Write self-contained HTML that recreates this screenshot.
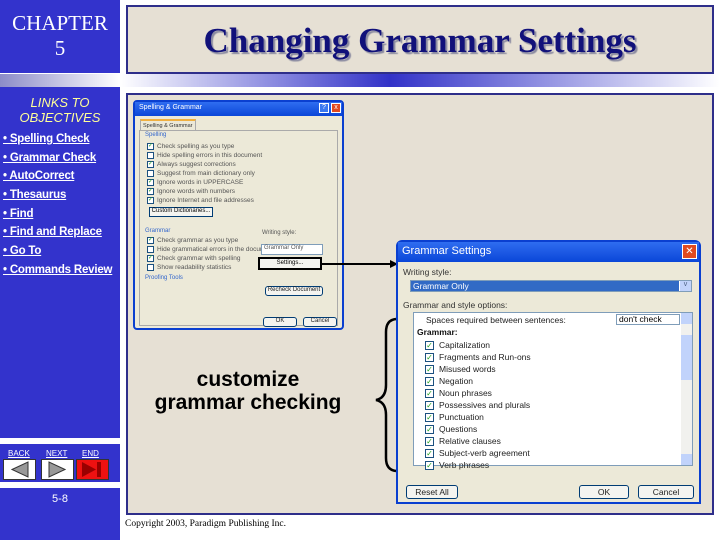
<!DOCTYPE html>
<html><head><meta charset="utf-8"><style>
*{margin:0;padding:0;box-sizing:border-box}
body{width:720px;height:540px;position:relative;background:#fff;font-family:"Liberation Sans",sans-serif;overflow:hidden}
.abs{position:absolute}
.blue{background:#3333cc}
.beige{background:#e6e0d4;border:2px solid #2e2e8a}
.links a{color:#fff;font-weight:bold;font-size:11.5px;text-decoration:underline;display:block;height:18.7px;font-family:"Liberation Sans Narrow","Liberation Sans",sans-serif;letter-spacing:-0.2px}
.dlg{background:#ece9d8;border:2px solid #0a3fd0;border-radius:6px 6px 0 0}
.tb{background:linear-gradient(#2f6df0,#0a46d8);color:#fff;font-size:8px;padding:2px 5px}
.cb{display:flex;align-items:center;font-size:6.5px;color:#555;height:9px;margin-left:12px;white-space:nowrap}
.cb i{width:7px;height:7px;border:1px solid #1c5180;background:#fff;margin-right:3px;font-size:6px;line-height:5px;color:#21a121;font-style:normal;text-align:center}
.gl{display:flex;align-items:center;font-size:8.5px;color:#222;height:12px;margin-left:11px}
.gl i{width:9px;height:9px;border:1px solid #1c5180;background:#fff;margin-right:5px;font-size:8px;line-height:7px;color:#21a121;font-style:normal;text-align:center}
.btn{position:absolute;border:1px solid #003c74;background:#f4f4f0;border-radius:3px;font-size:8px;text-align:center;color:#222}
</style></head><body>
<div class="abs blue" style="left:0;top:0;width:120px;height:73px;color:#fff;font-family:'Liberation Serif',serif;font-size:21px;text-align:center;line-height:25px;padding-top:11px">CHAPTER<br>5</div>
<div class="abs" style="left:0;top:74px;width:120px;height:13px;background:linear-gradient(90deg,#8c8cc8,#fff)"></div>
<div class="abs" style="left:120px;top:74px;width:600px;height:13px;background:linear-gradient(90deg,#fff 0%,#3232c8 45%,#fff 100%)"></div>
<div class="abs blue" style="left:0;top:87px;width:120px;height:351px">
<div style="color:#ffff99;font-style:italic;font-size:13px;text-align:center;line-height:15px;margin-top:8px">LINKS TO<br>OBJECTIVES</div>
<div class="links" style="position:absolute;left:3px;top:46px;color:#fff;font-size:11px">
<a>• Spelling Check</a><a>• Grammar Check</a><a>• AutoCorrect</a><a>• Thesaurus</a><a>• Find</a><a>• Find and Replace</a><a>• Go To</a><a>• Commands Review</a></div></div>
<div class="abs blue" style="left:0;top:444px;width:120px;height:38px">
<div style="position:absolute;top:5px;left:8px;color:#fff;font-size:8px;text-decoration:underline">BACK</div>
<div style="position:absolute;top:5px;left:46px;color:#fff;font-size:8px;text-decoration:underline">NEXT</div>
<div style="position:absolute;top:5px;left:82px;color:#fff;font-size:8px;text-decoration:underline">END</div>
<svg style="position:absolute;left:3px;top:15px" width="106" height="21"><rect x="0.5" y="0.5" width="32" height="20" fill="#fff" stroke="#333"/><polygon points="9,10.5 25,3 25,18" fill="#999" stroke="#333"/><rect x="38.5" y="0.5" width="32" height="20" fill="#fff" stroke="#333"/><polygon points="62,10.5 46,3 46,18" fill="#999" stroke="#333"/><rect x="73.5" y="0.5" width="32" height="20" fill="#ee1111" stroke="#333"/><polygon points="93,10.5 79,3 79,18" fill="#900"/><rect x="94" y="3" width="4" height="15" fill="#900"/></svg></div>
<div class="abs blue" style="left:0;top:488px;width:120px;height:52px;color:#fff;font-size:11px;text-align:center;padding-top:5px">5-8</div>
<div class="abs beige" style="left:126px;top:5px;width:588px;height:69px;font-family:'Liberation Serif',serif;font-weight:bold;font-size:35px;color:#11117a;text-align:center;line-height:68px;text-shadow:2px 2px 1px #8a8aa0">Changing Grammar Settings</div>
<div class="abs beige" style="left:126px;top:93px;width:588px;height:422px"></div>
<div class="abs" style="left:125px;top:519px;font-family:'Liberation Serif',serif;font-size:9.5px;color:#000">Copyright 2003, Paradigm Publishing Inc.</div>
<!-- spelling dialog -->
<div class="abs dlg" style="left:133px;top:100px;width:211px;height:230px;border-radius:4px">
<div class="tb" style="height:14px;font-size:7px;padding:2px 4px">Spelling &amp; Grammar<span style="position:absolute;right:13px;top:1px;width:10px;height:10px;background:#3a78f0;border:1px solid #fff;font-size:7px;text-align:center;line-height:8px">?</span><span style="position:absolute;right:1px;top:1px;width:10px;height:10px;background:#e04a20;border:1px solid #fff;font-size:7px;text-align:center;line-height:8px">x</span></div>
<div style="position:absolute;left:5px;top:17px;width:56px;height:11px;font-size:5.5px;color:#333;border:1px solid #aaa;border-bottom:none;padding:2px;white-space:nowrap;border-top:2px solid #f0b040">Spelling &amp; Grammar</div>
<div style="position:absolute;left:4px;top:28px;width:199px;height:196px;border:1px solid #aaa"></div>
<div style="position:absolute;left:0;top:30px;width:200px">
<div style="font-size:6px;color:#36c;margin:0 0 1px 10px;height:9px">Spelling</div>
<div class="cb"><i>✓</i>Check spelling as you type</div><div class="cb"><i></i>Hide spelling errors in this document</div><div class="cb"><i>✓</i>Always suggest corrections</div><div class="cb"><i></i>Suggest from main dictionary only</div><div class="cb"><i>✓</i>Ignore words in UPPERCASE</div><div class="cb"><i>✓</i>Ignore words with numbers</div><div class="cb"><i>✓</i>Ignore Internet and file addresses</div>
<div style="margin:2px 0 0 14px;width:64px;height:10px;border:1px solid #003c74;font-size:6px;text-align:center;background:#f4f4f0">Custom Dictionaries...</div>
<div style="font-size:6px;color:#36c;margin:11px 0 0 10px;height:8px">Grammar</div>
<div class="cb"><i>✓</i>Check grammar as you type</div><div class="cb"><i></i>Hide grammatical errors in the document</div><div class="cb"><i>✓</i>Check grammar with spelling</div><div class="cb"><i></i>Show readability statistics</div>
<div style="font-size:6px;color:#36c;margin:3px 0 0 10px">Proofing Tools</div>
</div>
<div style="position:absolute;left:127px;top:128px;font-size:6px;color:#555;background:#ece9d8">Writing style:</div>
<div style="position:absolute;left:126px;top:142px;width:62px;height:11px;border:1px solid #7f9db9;background:#fff;font-size:6px;color:#555;padding-left:2px">Grammar Only</div>
<div class="btn" style="left:130px;top:184px;width:58px;height:10px;font-size:6px">Recheck Document</div>
<div class="btn" style="left:128px;top:215px;width:34px;height:10px;font-size:6px">OK</div>
<div class="btn" style="left:168px;top:215px;width:34px;height:10px;font-size:6px">Cancel</div>
</div>
<div class="abs" style="left:258px;top:257px;width:64px;height:13px;border:2px solid #000;background:#f4f4f0;font-size:6px;text-align:center;line-height:9px">Settings...</div>
<svg class="abs" style="left:320px;top:240px" width="80" height="240"><line x1="0" y1="24" x2="72" y2="24" stroke="#000" stroke-width="2"/><polygon points="78,24 70,20 70,28" fill="#000"/>
<path d="M76 79 Q66 80 66 92 L66 145 Q66 158 56 160 Q66 162 66 175 L66 218 Q66 230 76 231" fill="none" stroke="#000" stroke-width="2.5"/></svg>
<div class="abs" style="left:128px;top:368px;width:240px;text-align:center;font-weight:bold;font-size:21px;line-height:23px;color:#000">customize<br>grammar checking</div>
<!-- grammar settings -->
<div class="abs dlg" style="left:396px;top:240px;width:305px;height:264px;border-color:#0a3fd0">
<div class="tb" style="height:20px;font-size:11px;padding:3px 4px">Grammar Settings<span style="position:absolute;right:2px;top:2px;width:15px;height:15px;background:#e04a20;border:1px solid #fff;font-size:10px;text-align:center;line-height:13px">✕</span></div>
<div style="font-size:8.5px;color:#333;margin:5px 0 0 5px">Writing style:</div>
<div style="margin:3px 0 0 12px;width:282px;height:12px;border:1px solid #7f9db9;background:#fff;position:relative"><div style="background:#316ac5;color:#fff;font-size:8.5px;height:10px;line-height:10px;width:268px;padding-left:2px">Grammar Only</div><div style="position:absolute;right:0;top:0;width:11px;height:10px;background:#c1d3fb;font-size:7px;text-align:center;color:#4d6185">v</div></div>
<div style="font-size:8.5px;color:#333;margin:8px 0 0 5px">Grammar and style options:</div>
<div style="position:relative;margin:2px 0 0 15px;width:280px;height:154px;border:1px solid #7f9db9;background:#fff">
<div style="font-size:8.5px;color:#222;margin:2px 0 0 12px;height:12px">Spaces required between sentences:</div>
<div style="position:absolute;left:202px;top:1px;width:64px;height:11px;border:1px solid #7f9db9;font-size:8.5px;line-height:9px;padding-left:2px">don't check</div>
<div style="position:absolute;right:0;top:0;width:11px;height:152px;background:#f1f1ee"><div style="height:11px;background:#c1d3fb"></div><div style="margin-top:11px;height:45px;background:#c1d3fb"></div><div style="position:absolute;bottom:0;width:11px;height:11px;background:#c1d3fb"></div></div>
<div style="font-size:8.5px;color:#111;font-weight:bold;margin:0 0 0 3px;height:12px">Grammar:</div>
<div class="gl"><i>✓</i>Capitalization</div><div class="gl"><i>✓</i>Fragments and Run-ons</div><div class="gl"><i>✓</i>Misused words</div><div class="gl"><i>✓</i>Negation</div><div class="gl"><i>✓</i>Noun phrases</div><div class="gl"><i>✓</i>Possessives and plurals</div><div class="gl"><i>✓</i>Punctuation</div><div class="gl"><i>✓</i>Questions</div><div class="gl"><i>✓</i>Relative clauses</div><div class="gl"><i>✓</i>Subject-verb agreement</div><div class="gl"><i>✓</i>Verb phrases</div>
</div>
<div class="btn" style="left:8px;top:243px;width:52px;height:14px;line-height:12px;font-size:8.5px">Reset All</div>
<div class="btn" style="left:181px;top:243px;width:50px;height:14px;line-height:12px;font-size:8.5px">OK</div>
<div class="btn" style="left:240px;top:243px;width:56px;height:14px;line-height:12px;font-size:8.5px">Cancel</div>
</div>
</body></html>
